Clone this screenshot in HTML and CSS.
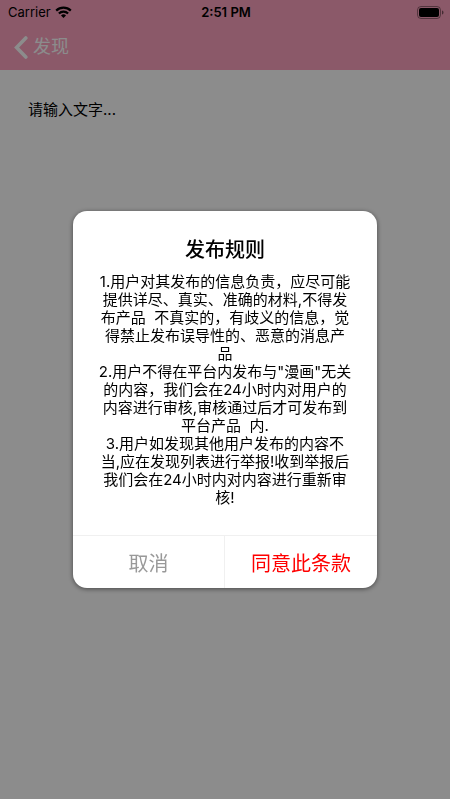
FILE: index.html
```
<!DOCTYPE html>
<html lang="zh-CN">
<head>
    <meta charset="UTF-8">
    <meta name="viewport" content="width=device-width, initial-scale=1.0">
    <title>发布</title>
    <link rel="stylesheet" href="styles.css">
</head>
<body>
    <header class="header">
        <div class="status-bar">
            <div class="carrier">
                <span>Carrier</span>
                <svg width="17" height="12" viewBox="0 0 17 12" fill="none" stroke="#000" stroke-width="2.2">
                    <path d="M1.2 4.6a10.4 10.4 0 0 1 14.6 0"/>
                    <path d="M3.9 7.5a6.5 6.5 0 0 1 9.2 0"/>
                    <path d="M8.5 12 6 9.5a3.6 3.6 0 0 1 5 0z" fill="#000" stroke="none"/>
                </svg>
            </div>
            <div class="time">2:51 PM</div>
            <div class="battery">
                <svg width="27" height="13" viewBox="0 0 27 13">
                    <rect x="0.5" y="0.5" width="23" height="12" rx="3.5" fill="none" stroke="#000" stroke-opacity="0.4"/>
                    <rect x="2" y="2" width="20" height="9" rx="2" fill="#000"/>
                    <path d="M25 4.5c2 .6 2 3.4 0 4z" fill="#000" fill-opacity="0.5"/>
                </svg>
            </div>
        </div>
        <nav class="nav-bar">
            <a href="#" class="back">
                <svg width="14" height="23" viewBox="0 0 14 23" fill="none" stroke="currentColor" stroke-width="3.6" stroke-linecap="round" stroke-linejoin="miter">
                    <path d="M11.8 2 2.6 11.5 11.8 21"/>
                </svg>
                <span>发现</span>
            </a>
        </nav>
    </header>

    <main class="editor">
        <textarea class="post-input" aria-label="发布内容" placeholder="请输入文字..."></textarea>
    </main>

    <div class="overlay">
        <div class="dialog" role="dialog" aria-modal="true" aria-labelledby="rules-title">
            <div class="dialog-body">
                <h2 id="rules-title">发布规则</h2>
                <p>1.用户对其发布的信息负责，应尽可能提供详尽、真实、准确的材料,不得发布产品&nbsp; 不真实的，有歧义的信息，觉得禁止发布误导性的、恶意的消息产品</p>
                <p>2.用户不得在平台内发布与"漫画"无关的内容，我们会在24小时内对用户的内容进行审核,审核通过后才可发布到平台产品&nbsp; 内.</p>
                <p>3.用户如发现其他用户发布的内容不当,应在发现列表进行举报!收到举报后我们会在24小时内对内容进行重新审核!</p>
            </div>
            <div class="dialog-actions">
                <button type="button" class="cancel">取消</button>
                <button type="button" class="agree">同意此条款</button>
            </div>
        </div>
    </div>
</body>
</html>
```
FILE: styles.css
```
* {
    box-sizing: border-box;
}

body {
    margin: 0;
    min-height: 100vh;
    background-color: #fff;
    color: #000;
    font-family: Inter, "Noto Sans CJK SC", sans-serif;
    font-size: 15px;
}

.header {
    background-color: #fda2bf;
}

.status-bar {
    display: grid;
    grid-template-columns: 1fr auto 1fr;
    align-items: center;
    height: 24px;
    padding: 0 6px 0 8px;
    font-size: 13px;
}

.carrier {
    display: flex;
    align-items: center;
    gap: 4px;
}

.time {
    font-weight: 600;
}

.battery {
    display: flex;
    justify-content: flex-end;
}

.nav-bar {
    display: flex;
    align-items: center;
    height: 46px;
    padding: 0 14px;
}

.back {
    display: flex;
    align-items: center;
    gap: 5px;
    color: #fff;
    font-size: 18px;
    line-height: 24px;
    text-decoration: none;
}

.editor {
    padding: 28px;
}

.post-input {
    display: block;
    width: 100%;
    height: 160px;
    padding: 0;
    border: none;
    outline: none;
    resize: none;
    background: none;
    font-family: inherit;
    font-size: 15px;
    line-height: 24px;
}

.post-input::placeholder {
    color: #000;
    opacity: 1;
}

/* rules dialog */
.overlay {
    position: fixed;
    inset: 0;
    display: flex;
    align-items: center;
    justify-content: center;
    padding: 0 73px;
    background-color: rgba(0, 0, 0, 0.45);
}

.dialog {
    width: 100%;
    max-width: 360px;
    overflow: hidden;
    border-radius: 14px;
    background-color: #fff;
    box-shadow: 0 1px 5px rgba(0, 0, 0, 0.5);
}

.dialog-body {
    padding: 24px 25px 28px;
    text-align: center;
}

.dialog-body h2 {
    margin: 0 0 8px;
    font-size: 20px;
    font-weight: 500;
    line-height: 30px;
}

.dialog-body p {
    margin: 0;
    line-height: 18px;
}

.dialog-actions {
    display: grid;
    grid-template-columns: 1fr 1fr;
    border-top: 1px solid #f0f0f0;
}

.dialog-actions button {
    height: 52px;
    padding: 0;
    border: none;
    background: none;
    font-family: inherit;
    font-size: 20px;
    cursor: pointer;
}

.dialog-actions .cancel {
    border-right: 1px solid #f0f0f0;
    color: #999;
}

.dialog-actions .agree {
    color: #f00;
}
```
